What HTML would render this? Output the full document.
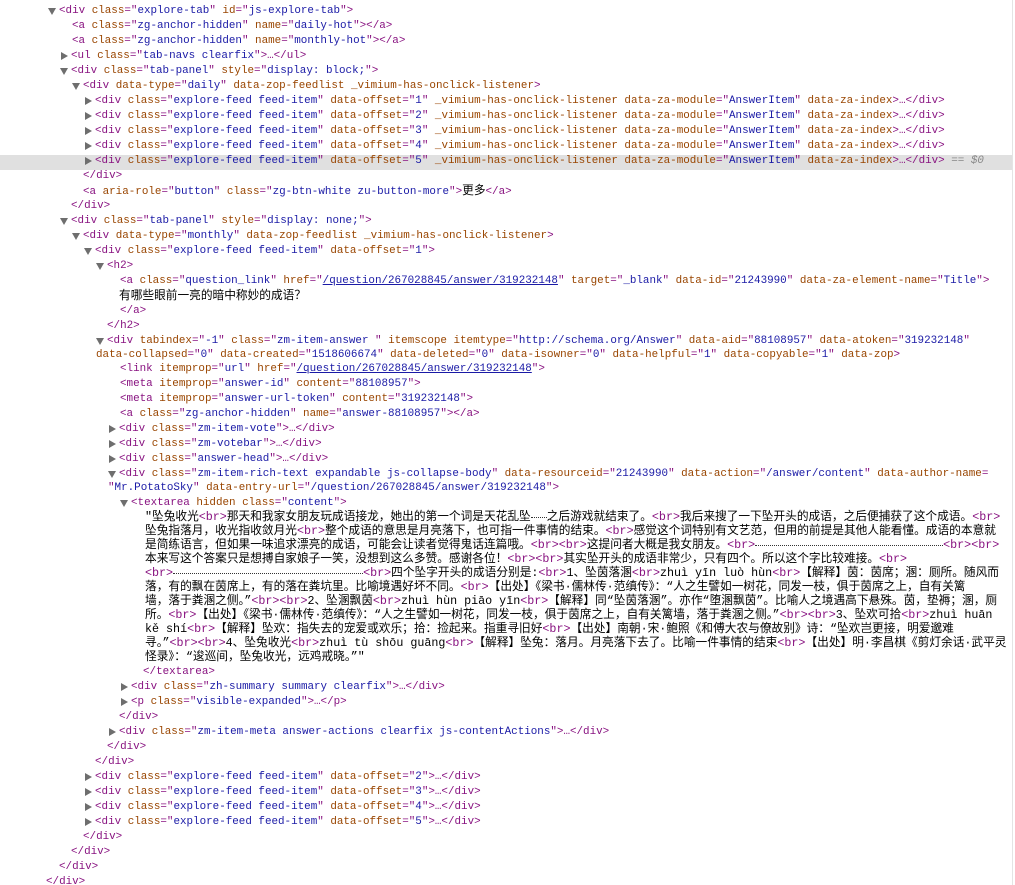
<!DOCTYPE html>
<html><head><meta charset="utf-8"><style>
html,body{margin:0;padding:0;background:#fff;width:1015px;height:885px;overflow:hidden;position:relative}
.l{position:absolute;white-space:nowrap;height:15px;line-height:15px;font-family:"Liberation Mono","Noto Sans CJK SC",monospace;font-size:10.9px;color:#222}
.c{font-size:11.7px;color:#000}
.t{color:#881280}.a{color:#994500}.v{color:#1a1aa6}.u{color:#1a1aa6;text-decoration:underline}
.r::before,.d::before{content:"";position:absolute;top:3px;left:-10px;width:0;height:0}
.r::before{border-top:4px solid transparent;border-bottom:4px solid transparent;border-left:7px solid #6e6e6e}
.d::before{top:4px;left:-11px;border-left:4px solid transparent;border-right:4px solid transparent;border-top:7px solid #6e6e6e}
.sel{position:absolute;left:0;top:155px;width:1012px;height:15px;background:#e0e0e0}
.dots{display:inline-block;border-bottom:1px dotted #333;vertical-align:2px;height:0}
.vl{position:absolute;left:1012px;top:0;width:1px;height:885px;background:#e4e4e4}
</style></head><body>
<div class="sel"></div>
<div class="vl"></div>
<div class="l t" style="top:-11px;left:46px">&lt;/div&gt;</div>
<div class="l d" style="top:4px;left:59px"><span class="t">&lt;div </span><span class="a">class</span><span class="t">="</span><span class="v">explore-tab</span><span class="t">" </span><span class="a">id</span><span class="t">="</span><span class="v">js-explore-tab</span><span class="t">"&gt;</span></div>
<div class="l" style="top:19px;left:72px"><span class="t">&lt;a </span><span class="a">class</span><span class="t">="</span><span class="v">zg-anchor-hidden</span><span class="t">" </span><span class="a">name</span><span class="t">="</span><span class="v">daily-hot</span><span class="t">"&gt;&lt;/a&gt;</span></div>
<div class="l" style="top:34px;left:72px"><span class="t">&lt;a </span><span class="a">class</span><span class="t">="</span><span class="v">zg-anchor-hidden</span><span class="t">" </span><span class="a">name</span><span class="t">="</span><span class="v">monthly-hot</span><span class="t">"&gt;&lt;/a&gt;</span></div>
<div class="l r" style="top:49px;left:71px"><span class="t">&lt;ul </span><span class="a">class</span><span class="t">="</span><span class="v">tab-navs clearfix</span><span class="t">"&gt;…&lt;/ul&gt;</span></div>
<div class="l d" style="top:64px;left:71px"><span class="t">&lt;div </span><span class="a">class</span><span class="t">="</span><span class="v">tab-panel</span><span class="t">" </span><span class="a">style</span><span class="t">="</span><span class="v">display: block;</span><span class="t">"&gt;</span></div>
<div class="l d" style="top:79px;left:83px"><span class="t">&lt;div </span><span class="a">data-type</span><span class="t">="</span><span class="v">daily</span><span class="t">" </span><span class="a">data-zop-feedlist _vimium-has-onclick-listener</span><span class="t">&gt;</span></div>
<div class="l r" style="top:94px;left:95px"><span class="t">&lt;div </span><span class="a">class</span><span class="t">="</span><span class="v">explore-feed feed-item</span><span class="t">" </span><span class="a">data-offset</span><span class="t">="</span><span class="v">1</span><span class="t">" </span><span class="a">_vimium-has-onclick-listener data-za-module</span><span class="t">="</span><span class="v">AnswerItem</span><span class="t">" </span><span class="a">data-za-index</span><span class="t">&gt;…&lt;/div&gt;</span></div>
<div class="l r" style="top:109px;left:95px"><span class="t">&lt;div </span><span class="a">class</span><span class="t">="</span><span class="v">explore-feed feed-item</span><span class="t">" </span><span class="a">data-offset</span><span class="t">="</span><span class="v">2</span><span class="t">" </span><span class="a">_vimium-has-onclick-listener data-za-module</span><span class="t">="</span><span class="v">AnswerItem</span><span class="t">" </span><span class="a">data-za-index</span><span class="t">&gt;…&lt;/div&gt;</span></div>
<div class="l r" style="top:124px;left:95px"><span class="t">&lt;div </span><span class="a">class</span><span class="t">="</span><span class="v">explore-feed feed-item</span><span class="t">" </span><span class="a">data-offset</span><span class="t">="</span><span class="v">3</span><span class="t">" </span><span class="a">_vimium-has-onclick-listener data-za-module</span><span class="t">="</span><span class="v">AnswerItem</span><span class="t">" </span><span class="a">data-za-index</span><span class="t">&gt;…&lt;/div&gt;</span></div>
<div class="l r" style="top:139px;left:95px"><span class="t">&lt;div </span><span class="a">class</span><span class="t">="</span><span class="v">explore-feed feed-item</span><span class="t">" </span><span class="a">data-offset</span><span class="t">="</span><span class="v">4</span><span class="t">" </span><span class="a">_vimium-has-onclick-listener data-za-module</span><span class="t">="</span><span class="v">AnswerItem</span><span class="t">" </span><span class="a">data-za-index</span><span class="t">&gt;…&lt;/div&gt;</span></div>
<div class="l r" style="top:154px;left:95px"><span class="t">&lt;div </span><span class="a">class</span><span class="t">="</span><span class="v">explore-feed feed-item</span><span class="t">" </span><span class="a">data-offset</span><span class="t">="</span><span class="v">5</span><span class="t">" </span><span class="a">_vimium-has-onclick-listener data-za-module</span><span class="t">="</span><span class="v">AnswerItem</span><span class="t">" </span><span class="a">data-za-index</span><span class="t">&gt;…&lt;/div&gt;</span><span style="color:#888;font-style:italic"> == $0</span></div>
<div class="l t" style="top:169px;left:83px">&lt;/div&gt;</div>
<div class="l" style="top:184px;left:83px"><span class="t">&lt;a </span><span class="a">aria-role</span><span class="t">="</span><span class="v">button</span><span class="t">" </span><span class="a">class</span><span class="t">="</span><span class="v">zg-btn-white zu-button-more</span><span class="t">"&gt;</span><span style="color:#000;font-size:11.7px">更多</span><span class="t">&lt;/a&gt;</span></div>
<div class="l t" style="top:199px;left:71px">&lt;/div&gt;</div>
<div class="l d" style="top:214px;left:71px"><span class="t">&lt;div </span><span class="a">class</span><span class="t">="</span><span class="v">tab-panel</span><span class="t">" </span><span class="a">style</span><span class="t">="</span><span class="v">display: none;</span><span class="t">"&gt;</span></div>
<div class="l d" style="top:229px;left:83px"><span class="t">&lt;div </span><span class="a">data-type</span><span class="t">="</span><span class="v">monthly</span><span class="t">" </span><span class="a">data-zop-feedlist _vimium-has-onclick-listener</span><span class="t">&gt;</span></div>
<div class="l d" style="top:244px;left:95px"><span class="t">&lt;div </span><span class="a">class</span><span class="t">="</span><span class="v">explore-feed feed-item</span><span class="t">" </span><span class="a">data-offset</span><span class="t">="</span><span class="v">1</span><span class="t">"&gt;</span></div>
<div class="l d t" style="top:259px;left:107px">&lt;h2&gt;</div>
<div class="l" style="top:274px;left:120px"><span class="t">&lt;a </span><span class="a">class</span><span class="t">="</span><span class="v">question_link</span><span class="t">" </span><span class="a">href</span><span class="t">="</span><span class="u">/question/267028845/answer/319232148</span><span class="t">" </span><span class="a">target</span><span class="t">="</span><span class="v">_blank</span><span class="t">" </span><span class="a">data-id</span><span class="t">="</span><span class="v">21243990</span><span class="t">" </span><span class="a">data-za-element-name</span><span class="t">="</span><span class="v">Title</span><span class="t">"&gt;</span></div>
<div class="l c" style="top:289px;left:119px">有哪些眼前一亮的暗中称妙的成语？</div>
<div class="l t" style="top:304px;left:120px">&lt;/a&gt;</div>
<div class="l t" style="top:319px;left:107px">&lt;/h2&gt;</div>
<div class="l d" style="top:334px;left:107px"><span class="t">&lt;div </span><span class="a">tabindex</span><span class="t">="</span><span class="v">-1</span><span class="t">" </span><span class="a">class</span><span class="t">="</span><span class="v">zm-item-answer </span><span class="t">" </span><span class="a">itemscope itemtype</span><span class="t">="</span><span class="v">http://schema.org/Answer</span><span class="t">" </span><span class="a">data-aid</span><span class="t">="</span><span class="v">88108957</span><span class="t">" </span><span class="a">data-atoken</span><span class="t">="</span><span class="v">319232148</span><span class="t">"</span></div>
<div class="l" style="top:348px;left:96px"><span class="a">data-collapsed</span><span class="t">="</span><span class="v">0</span><span class="t">" </span><span class="a">data-created</span><span class="t">="</span><span class="v">1518606674</span><span class="t">" </span><span class="a">data-deleted</span><span class="t">="</span><span class="v">0</span><span class="t">" </span><span class="a">data-isowner</span><span class="t">="</span><span class="v">0</span><span class="t">" </span><span class="a">data-helpful</span><span class="t">="</span><span class="v">1</span><span class="t">" </span><span class="a">data-copyable</span><span class="t">="</span><span class="v">1</span><span class="t">" </span><span class="a">data-zop</span><span class="t">&gt;</span></div>
<div class="l" style="top:362px;left:120px"><span class="t">&lt;link </span><span class="a">itemprop</span><span class="t">="</span><span class="v">url</span><span class="t">" </span><span class="a">href</span><span class="t">="</span><span class="u">/question/267028845/answer/319232148</span><span class="t">"&gt;</span></div>
<div class="l" style="top:377px;left:120px"><span class="t">&lt;meta </span><span class="a">itemprop</span><span class="t">="</span><span class="v">answer-id</span><span class="t">" </span><span class="a">content</span><span class="t">="</span><span class="v">88108957</span><span class="t">"&gt;</span></div>
<div class="l" style="top:392px;left:120px"><span class="t">&lt;meta </span><span class="a">itemprop</span><span class="t">="</span><span class="v">answer-url-token</span><span class="t">" </span><span class="a">content</span><span class="t">="</span><span class="v">319232148</span><span class="t">"&gt;</span></div>
<div class="l" style="top:407px;left:120px"><span class="t">&lt;a </span><span class="a">class</span><span class="t">="</span><span class="v">zg-anchor-hidden</span><span class="t">" </span><span class="a">name</span><span class="t">="</span><span class="v">answer-88108957</span><span class="t">"&gt;&lt;/a&gt;</span></div>
<div class="l r" style="top:422px;left:119px"><span class="t">&lt;div </span><span class="a">class</span><span class="t">="</span><span class="v">zm-item-vote</span><span class="t">"&gt;…&lt;/div&gt;</span></div>
<div class="l r" style="top:437px;left:119px"><span class="t">&lt;div </span><span class="a">class</span><span class="t">="</span><span class="v">zm-votebar</span><span class="t">"&gt;…&lt;/div&gt;</span></div>
<div class="l r" style="top:452px;left:119px"><span class="t">&lt;div </span><span class="a">class</span><span class="t">="</span><span class="v">answer-head</span><span class="t">"&gt;…&lt;/div&gt;</span></div>
<div class="l d" style="top:467px;left:119px"><span class="t">&lt;div </span><span class="a">class</span><span class="t">="</span><span class="v">zm-item-rich-text expandable js-collapse-body</span><span class="t">" </span><span class="a">data-resourceid</span><span class="t">="</span><span class="v">21243990</span><span class="t">" </span><span class="a">data-action</span><span class="t">="</span><span class="v">/answer/content</span><span class="t">" </span><span class="a">data-author-name</span><span class="t">=</span></div>
<div class="l" style="top:481px;left:108px"><span class="t">"</span><span class="v">Mr.PotatoSky</span><span class="t">" </span><span class="a">data-entry-url</span><span class="t">="</span><span class="v">/question/267028845/answer/319232148</span><span class="t">"&gt;</span></div>
<div class="l d" style="top:496px;left:131px"><span class="t">&lt;textarea </span><span class="a">hidden class</span><span class="t">="</span><span class="v">content</span><span class="t">"&gt;</span></div>
<div class="l c" style="top:510px;left:145px">"坠兔收光<span class="t">&lt;br&gt;</span>那天和我家女朋友玩成语接龙，她出的第一个词是天花乱坠<span class="dots" style="width:16px"></span>之后游戏就结束了。<span class="t">&lt;br&gt;</span>我后来搜了一下坠开头的成语，之后便捕获了这个成语。<span class="t">&lt;br&gt;</span></div>
<div class="l c" style="top:524px;left:145px">坠兔指落月，收光指收敛月光<span class="t">&lt;br&gt;</span>整个成语的意思是月亮落下，也可指一件事情的结束。<span class="t">&lt;br&gt;</span>感觉这个词特别有文艺范，但用的前提是其他人能看懂。成语的本意就</div>
<div class="l c" style="top:538px;left:145px">是简练语言，但如果一味追求漂亮的成语，可能会让读者觉得鬼话连篇哦。<span class="t">&lt;br&gt;&lt;br&gt;</span>这提问者大概是我女朋友。<span class="t">&lt;br&gt;</span><span class="dots" style="width:188px"></span><span class="t">&lt;br&gt;&lt;br&gt;</span></div>
<div class="l c" style="top:552px;left:145px">本来写这个答案只是想搏自家娘子一笑，没想到这么多赞。感谢各位！<span class="t">&lt;br&gt;&lt;br&gt;</span>其实坠开头的成语非常少，只有四个。所以这个字比较难接。<span class="t">&lt;br&gt;</span></div>
<div class="l c" style="top:566px;left:145px"><span class="t">&lt;br&gt;</span><span class="dots" style="width:190px"></span><span class="t">&lt;br&gt;</span>四个坠字开头的成语分别是:<span class="t">&lt;br&gt;</span>1、坠茵落溷<span class="t">&lt;br&gt;</span>zhuì yīn luò hùn<span class="t">&lt;br&gt;</span>【解释】茵：茵席；溷：厕所。随风而</div>
<div class="l c" style="top:580px;left:145px">落，有的飘在茵席上，有的落在粪坑里。比喻境遇好坏不同。<span class="t">&lt;br&gt;</span>【出处】《梁书·儒林传·范缜传》：“人之生譬如一树花，同发一枝，俱于茵席之上，自有关篱</div>
<div class="l c" style="top:594px;left:145px">墙，落于粪溷之侧。”<span class="t">&lt;br&gt;&lt;br&gt;</span>2、坠溷飘茵<span class="t">&lt;br&gt;</span>zhuì hùn piāo yīn<span class="t">&lt;br&gt;</span>【解释】同“坠茵落溷”。亦作“堕溷飘茵”。比喻人之境遇高下悬殊。茵，垫褥；溷，厕</div>
<div class="l c" style="top:608px;left:145px">所。<span class="t">&lt;br&gt;</span>【出处】《梁书·儒林传·范缜传》：“人之生譬如一树花，同发一枝，俱于茵席之上，自有关篱墙，落于粪溷之侧。”<span class="t">&lt;br&gt;&lt;br&gt;</span>3、坠欢可拾<span class="t">&lt;br&gt;</span>zhuì huān</div>
<div class="l c" style="top:622px;left:145px">kě shí<span class="t">&lt;br&gt;</span>【解释】坠欢：指失去的宠爱或欢乐；拾：捡起来。指重寻旧好<span class="t">&lt;br&gt;</span>【出处】南朝·宋·鲍照《和傅大农与僚故别》诗：“坠欢岂更接，明爱邈难</div>
<div class="l c" style="top:636px;left:145px">寻。”<span class="t">&lt;br&gt;&lt;br&gt;</span>4、坠兔收光<span class="t">&lt;br&gt;</span>zhuì tù shōu guāng<span class="t">&lt;br&gt;</span>【解释】坠兔：落月。月亮落下去了。比喻一件事情的结束<span class="t">&lt;br&gt;</span>【出处】明·李昌棋《剪灯余话·武平灵</div>
<div class="l c" style="top:650px;left:145px">怪录》：“逡巡间，坠兔收光，远鸡戒晓。”"</div>
<div class="l t" style="top:665px;left:143px">&lt;/textarea&gt;</div>
<div class="l r" style="top:680px;left:131px"><span class="t">&lt;div </span><span class="a">class</span><span class="t">="</span><span class="v">zh-summary summary clearfix</span><span class="t">"&gt;…&lt;/div&gt;</span></div>
<div class="l r" style="top:695px;left:131px"><span class="t">&lt;p </span><span class="a">class</span><span class="t">="</span><span class="v">visible-expanded</span><span class="t">"&gt;…&lt;/p&gt;</span></div>
<div class="l t" style="top:710px;left:119px">&lt;/div&gt;</div>
<div class="l r" style="top:725px;left:119px"><span class="t">&lt;div </span><span class="a">class</span><span class="t">="</span><span class="v">zm-item-meta answer-actions clearfix js-contentActions</span><span class="t">"&gt;…&lt;/div&gt;</span></div>
<div class="l t" style="top:740px;left:107px">&lt;/div&gt;</div>
<div class="l t" style="top:755px;left:95px">&lt;/div&gt;</div>
<div class="l r" style="top:770px;left:95px"><span class="t">&lt;div </span><span class="a">class</span><span class="t">="</span><span class="v">explore-feed feed-item</span><span class="t">" </span><span class="a">data-offset</span><span class="t">="</span><span class="v">2</span><span class="t">"&gt;…&lt;/div&gt;</span></div>
<div class="l r" style="top:785px;left:95px"><span class="t">&lt;div </span><span class="a">class</span><span class="t">="</span><span class="v">explore-feed feed-item</span><span class="t">" </span><span class="a">data-offset</span><span class="t">="</span><span class="v">3</span><span class="t">"&gt;…&lt;/div&gt;</span></div>
<div class="l r" style="top:800px;left:95px"><span class="t">&lt;div </span><span class="a">class</span><span class="t">="</span><span class="v">explore-feed feed-item</span><span class="t">" </span><span class="a">data-offset</span><span class="t">="</span><span class="v">4</span><span class="t">"&gt;…&lt;/div&gt;</span></div>
<div class="l r" style="top:815px;left:95px"><span class="t">&lt;div </span><span class="a">class</span><span class="t">="</span><span class="v">explore-feed feed-item</span><span class="t">" </span><span class="a">data-offset</span><span class="t">="</span><span class="v">5</span><span class="t">"&gt;…&lt;/div&gt;</span></div>
<div class="l t" style="top:830px;left:83px">&lt;/div&gt;</div>
<div class="l t" style="top:845px;left:71px">&lt;/div&gt;</div>
<div class="l t" style="top:860px;left:59px">&lt;/div&gt;</div>
<div class="l t" style="top:875px;left:46px">&lt;/div&gt;</div>
</body></html>
